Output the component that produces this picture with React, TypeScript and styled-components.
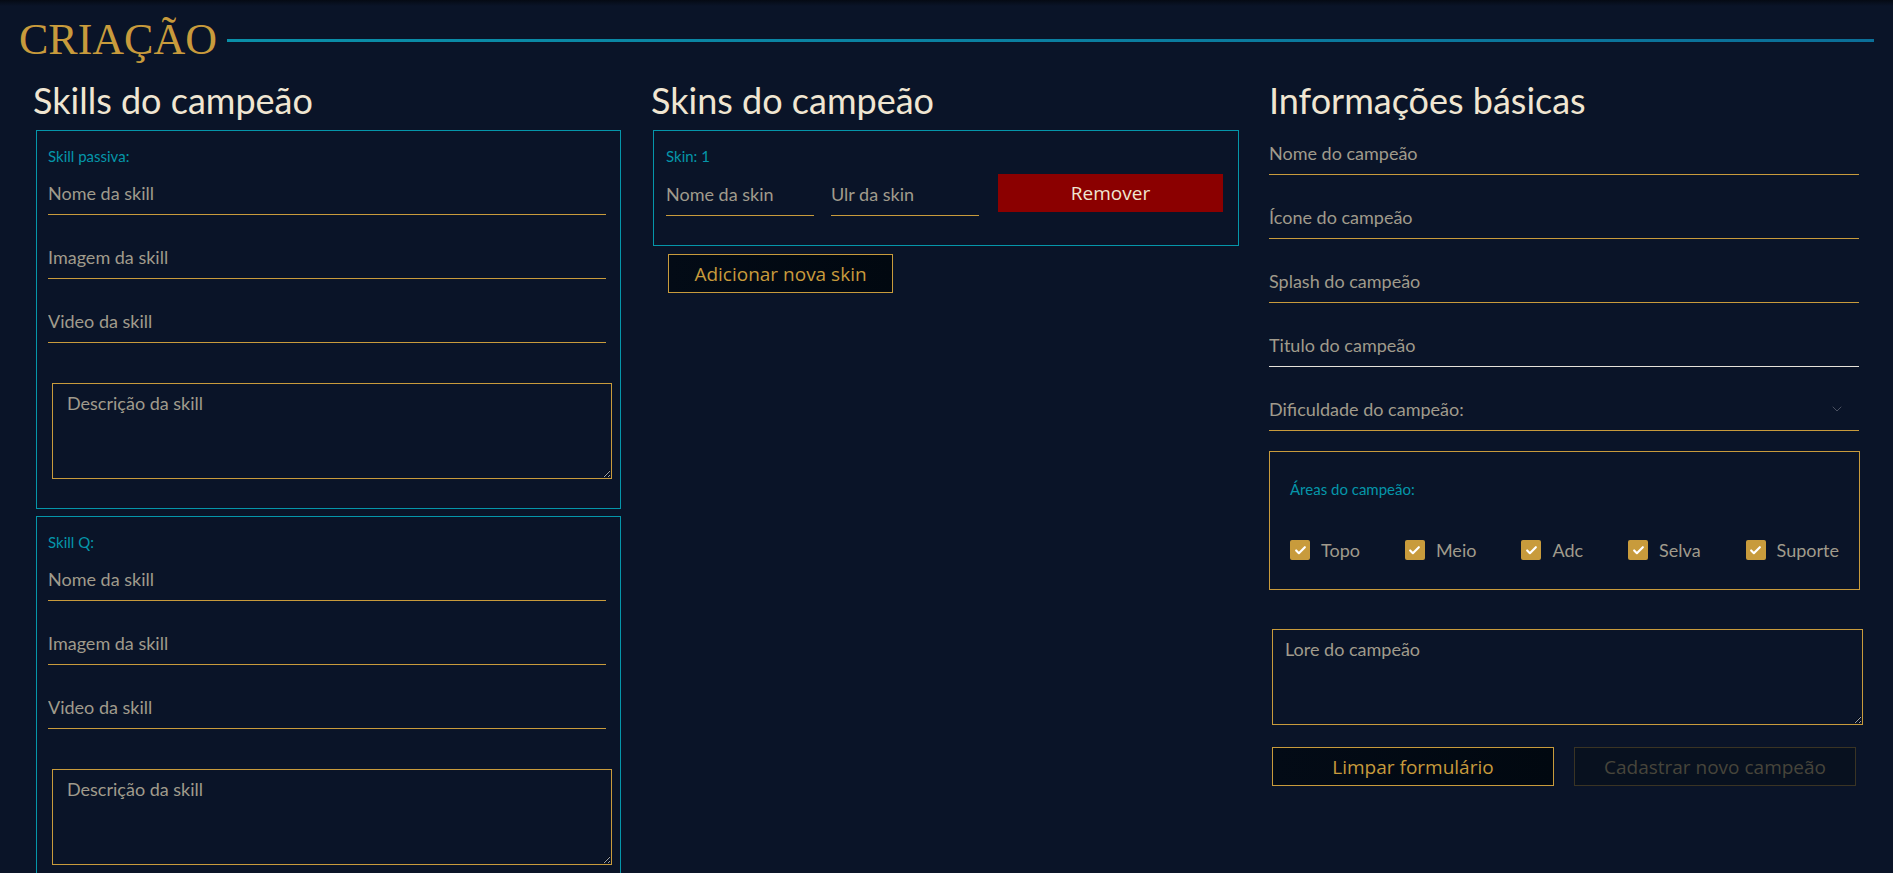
import React from 'react'
import styled, { createGlobalStyle } from 'styled-components'
import { Check, ChevronDown } from 'lucide-react'

const gold = '#c89b3c'
const teal = '#0596aa'
const grey = '#a09b8c'
const cream = '#f0e6d2'

const GlobalStyle = createGlobalStyle`
  html, body {
    margin: 0;
    background: #0a1428;
  }
  body {
    font-family: Lato, "Liberation Sans", sans-serif;
    color: ${cream};
  }
  * { box-sizing: border-box; }
`

const skills = ['Skill passiva:', 'Skill Q:']
const areas = ['Topo', 'Meio', 'Adc', 'Selva', 'Suporte']

export default function App() {
  return (
    <>
      <GlobalStyle />
      <Page>
        <TitleRow>
          <Title>CRIAÇÃO</Title>
          <TitleLine />
        </TitleRow>
        <Columns>
          <Column>
            <Heading>Skills do campeão</Heading>
            <Stack>
              {skills.map((name) => (
                <Box key={name}>
                  <SmallLabel>{name}</SmallLabel>
                  <Fields>
                    <Input placeholder="Nome da skill" />
                    <Input placeholder="Imagem da skill" />
                    <Input placeholder="Video da skill" />
                  </Fields>
                  <TextArea placeholder="Descrição da skill" />
                </Box>
              ))}
            </Stack>
          </Column>

          <Column>
            <Heading>Skins do campeão</Heading>
            <SkinBox>
              <SmallLabel>Skin: 1</SmallLabel>
              <SkinRow>
                <SkinInput placeholder="Nome da skin" />
                <SkinInput placeholder="Ulr da skin" />
                <RemoveButton>Remover</RemoveButton>
              </SkinRow>
            </SkinBox>
            <OutlineButton $width={225} $offset={17}>
              Adicionar nova skin
            </OutlineButton>
          </Column>

          <Column>
            <Heading>Informações básicas</Heading>
            <Fields $top={5}>
              <Input placeholder="Nome do campeão" />
              <Input placeholder="Ícone do campeão" />
              <Input placeholder="Splash do campeão" />
              <Input placeholder="Titulo do campeão" $light />
              <SelectWrap>
                <Select defaultValue="">
                  <option value="" disabled>
                    Dificuldade do campeão:
                  </option>
                  <option value="1">Fácil</option>
                  <option value="2">Média</option>
                  <option value="3">Difícil</option>
                </Select>
                <ChevronDown size={16} color="#4a5060" strokeWidth={1.5} />
              </SelectWrap>
            </Fields>
            <AreasBox>
              <SmallLabel>Áreas do campeão:</SmallLabel>
              <CheckRow>
                {areas.map((a) => (
                  <CheckItem key={a}>
                    <CheckBox>
                      <Check size={13} color="#ffffff" strokeWidth={4} />
                    </CheckBox>
                    {a}
                  </CheckItem>
                ))}
              </CheckRow>
            </AreasBox>
            <TextArea placeholder="Lore do campeão" $lore />
            <ButtonRow>
              <OutlineButton>Limpar formulário</OutlineButton>
              <OutlineButton disabled>Cadastrar novo campeão</OutlineButton>
            </ButtonRow>
          </Column>
        </Columns>
      </Page>
    </>
  )
}

const Page = styled.main`
  min-height: 873px;
  background: linear-gradient(to bottom, #050a14 0px, #0a1428 6px);
  padding: 0 0 40px;
`

const TitleRow = styled.header`
  display: flex;
  align-items: center;
  padding: 17px 19px 0 19px;
`

const Title = styled.h1`
  margin: 0;
  font-family: "Liberation Serif", "DejaVu Serif", serif;
  font-weight: 400;
  font-size: 44px;
  line-height: 46px;
  color: ${gold};
`

const TitleLine = styled.div`
  flex: 1;
  height: 3px;
  margin-left: 10px;
  background: linear-gradient(to right, #0a8fa8, #0b6f98);
`

const Columns = styled.div`
  display: grid;
  grid-template-columns: repeat(3, 590px);
  column-gap: 28px;
  padding: 0 0 0 33px;
  margin-top: 17px;
`

const Column = styled.section`
  display: flex;
  flex-direction: column;
  align-items: flex-start;
`

const Heading = styled.h2`
  margin: 0 0 10px;
  font-family: Lato, "Liberation Sans", sans-serif;
  font-weight: 400;
  font-size: 36px;
  line-height: 40px;
  color: ${cream};
`

const Stack = styled.div`
  display: flex;
  flex-direction: column;
  gap: 7px;
  margin-left: 3px;
`

const Box = styled.div`
  width: 585px;
  border: 1px solid ${teal};
  padding: 16px 14px 29px 11px;
`

const SmallLabel = styled.div`
  font-size: 15px;
  line-height: 18px;
  color: ${teal};
`

const Fields = styled.div<{ $top?: number }>`
  display: flex;
  flex-direction: column;
  gap: 24px;
  width: 100%;
  margin-top: ${(p) => p.$top ?? 10}px;
`

const Input = styled.input<{ $light?: boolean }>`
  width: 100%;
  height: 40px;
  padding: 0 0 4px;
  background: transparent;
  border: none;
  border-bottom: 1px solid ${(p) => (p.$light ? '#e6e2da' : gold)};
  outline: none;
  font-family: Lato, "Liberation Sans", sans-serif;
  font-size: 18px;
  color: ${cream};

  &::placeholder {
    color: ${grey};
    opacity: 1;
  }
`

const TextArea = styled.textarea<{ $lore?: boolean }>`
  display: block;
  width: ${(p) => (p.$lore ? '591px' : '560px')};
  height: 96px;
  margin: ${(p) => (p.$lore ? '39px 0 0 3px' : '40px 0 0 4px')};
  padding: ${(p) => (p.$lore ? '8px 12px' : '8px 14px')};
  background: transparent;
  border: 1px solid ${gold};
  outline: none;
  font-family: Lato, "Liberation Sans", sans-serif;
  font-size: 18px;
  color: ${cream};

  &::placeholder {
    color: ${grey};
    opacity: 1;
  }
`

const SkinBox = styled.div`
  width: 586px;
  margin-left: 2px;
  border: 1px solid ${teal};
  padding: 16px 15px 29px 12px;
`

const SkinRow = styled.div`
  display: flex;
  align-items: flex-end;
  gap: 17px;
  margin-top: 9px;
`

const SkinInput = styled(Input)`
  width: 148px;
`

const RemoveButton = styled.button`
  width: 226px;
  height: 38px;
  margin: 0 0 4px 2px;
  border: none;
  background: #8b0000;
  font-family: "Open Sans", "Noto Sans", sans-serif;
  font-size: 19px;
  color: ${cream};
  cursor: pointer;
`

const OutlineButton = styled.button<{ $width?: number; $offset?: number }>`
  width: ${(p) => (p.$width ? `${p.$width}px` : '282px')};
  height: 39px;
  margin: ${(p) => (p.$offset ? `8px 0 0 ${p.$offset}px` : '0')};
  border: 1px solid ${gold};
  background: linear-gradient(to right, #030b16, #010810);
  font-family: "Open Sans", "Noto Sans", sans-serif;
  font-size: 19px;
  color: ${gold};
  cursor: pointer;

  &:disabled {
    border-color: #3a3424;
    background: #08111f;
    color: #47453b;
    cursor: default;
  }
`

const SelectWrap = styled.div`
  display: flex;
  align-items: center;
  width: 100%;
  height: 40px;
  padding: 0 14px 4px 0;
  border-bottom: 1px solid ${gold};
`

const Select = styled.select`
  flex: 1;
  appearance: none;
  background: transparent;
  border: none;
  outline: none;
  padding: 0;
  font-family: Lato, "Liberation Sans", sans-serif;
  font-size: 18px;
  color: ${grey};

  option {
    background: #0a1428;
    color: ${cream};
  }
`

const AreasBox = styled.div`
  width: 591px;
  margin-top: 20px;
  border: 1px solid ${gold};
  padding: 28px 20px 28px 20px;
`

const CheckRow = styled.div`
  display: flex;
  justify-content: space-between;
  align-items: center;
  margin-top: 41px;
`

const CheckItem = styled.label`
  display: flex;
  align-items: center;
  gap: 11px;
  font-size: 18px;
  color: ${grey};
`

const CheckBox = styled.span`
  display: flex;
  align-items: center;
  justify-content: center;
  width: 20px;
  height: 20px;
  border-radius: 2px;
  background: ${gold};
`

const ButtonRow = styled.div`
  display: flex;
  gap: 20px;
  margin: 22px 0 0 3px;
`
